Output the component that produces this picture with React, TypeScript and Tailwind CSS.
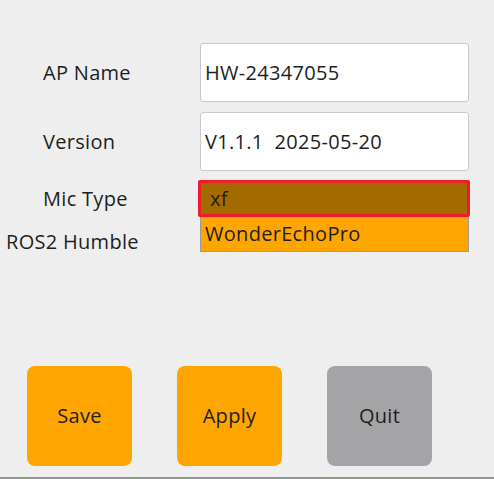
import React from "react";

const Field = ({ label, value }: { label: string; value: string }) => {
  return (
    <div className="flex items-center h-[59px]">
      <div className="w-[200px] pl-[43px]">{label}</div>
      <div className="w-[269px] h-full bg-white border border-[#c9c9c9] rounded-[3px] flex items-center pl-[4px] whitespace-pre">
        {value}
      </div>
    </div>
  );
};

const App = () => {
  return (
    <div
      className="w-[494px] h-[479px] bg-[#efeeef] text-[#1e1e1e] text-[20px] font-medium tracking-[0.3px] flex flex-col border-b-2 border-[#8d9a8c]"
      style={{ fontFamily: '"Open Sans", "DejaVu Sans", sans-serif' }}
    >
      <div className="pt-[43px] flex flex-col gap-[10px]">
        <Field label="AP Name" value="HW-24347055" />
        <Field label="Version" value="V1.1.1  2025-05-20" />
      </div>

      {/* Mic type with open list */}
      <div className="relative mt-[9px]">
        <div className="flex items-center h-[37px]">
          <div className="w-[198px] pl-[43px]">Mic Type</div>
          <div className="w-[272px] h-full border-[3px] border-[#ec1c2a] rounded-[2px] bg-[#a36a00] flex items-center pl-[9px]">
            xf
          </div>
        </div>
        <div className="flex items-center h-[50px]">
          <div className="pl-[6px] whitespace-nowrap">ROS2 Humble</div>
        </div>
        <div className="absolute left-[200px] top-[37px] w-[269px] h-[35px] bg-[#ffa500] border border-t-0 border-[#9a9a9a] flex items-center pl-[4px]">
          WonderEchoPro
        </div>
      </div>

      <div className="mt-auto mb-[11px] flex gap-[45px] pl-[27px]">
        <button className="w-[105px] h-[100px] rounded-[8px] bg-[#ffa500]">Save</button>
        <button className="w-[105px] h-[100px] rounded-[8px] bg-[#ffa500]">Apply</button>
        <button className="w-[105px] h-[100px] rounded-[8px] bg-[#a4a3a6]">Quit</button>
      </div>
    </div>
  );
};

export default App;
